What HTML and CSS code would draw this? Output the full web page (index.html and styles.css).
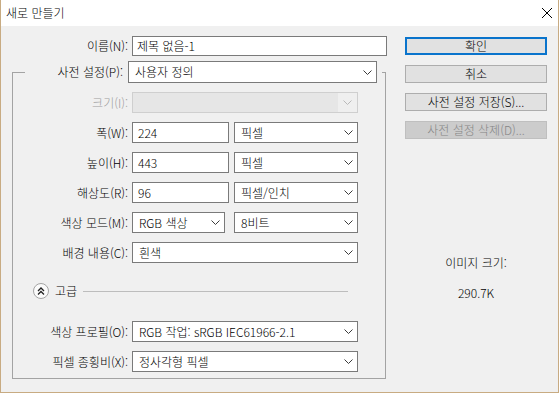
FILE: index.html
```html
<!DOCTYPE html>
<html lang="ko">
<head>
  <meta charset="UTF-8" />
  <title>새로 만들기</title>
  <link rel="stylesheet" href="styles.css">
</head>
<body>
  <div class="window">
    <div class="titlebar">
      <span class="title">새로 만들기</span>
      <svg class="close" viewBox="0 0 10 10"><path d="M0 0L10 10M10 0L0 10" stroke="#000" stroke-width="1" fill="none"/></svg>
    </div>

    <div class="content">
      <div class="main">
        <div class="row name-row">
          <span class="lbl">이름(N):</span>
          <div class="input w-name">제목 없음-1</div>
        </div>

        <fieldset class="group">
          <legend class="preset">
            <div class="preset-inner">
              <span class="lbl">사전 설정(P):</span>
              <div class="select w-preset"><span>사용자 정의</span>
                <svg class="chev" viewBox="0 0 9 5"><polyline points="0.5,0.5 4.5,4.5 8.5,0.5"/></svg>
              </div>
            </div>
          </legend>

          <div class="fields">
            <div class="row off">
              <span class="lbl">크기(I):</span>
              <div class="select w-full"><span></span>
                <span class="chev-box"><svg class="chev" viewBox="0 0 9 5"><polyline points="0.5,0.5 4.5,4.5 8.5,0.5"/></svg></span>
              </div>
            </div>
            <div class="row">
              <span class="lbl">폭(W):</span>
              <div class="pair">
                <div class="input w-num">224</div>
                <div class="select w-unit"><span>픽셀</span>
                  <svg class="chev" viewBox="0 0 9 5"><polyline points="0.5,0.5 4.5,4.5 8.5,0.5"/></svg>
                </div>
              </div>
            </div>
            <div class="row">
              <span class="lbl">높이(H):</span>
              <div class="pair">
                <div class="input w-num">443</div>
                <div class="select w-unit"><span>픽셀</span>
                  <svg class="chev" viewBox="0 0 9 5"><polyline points="0.5,0.5 4.5,4.5 8.5,0.5"/></svg>
                </div>
              </div>
            </div>
            <div class="row">
              <span class="lbl">해상도(R):</span>
              <div class="pair">
                <div class="input w-num">96</div>
                <div class="select w-unit"><span>픽셀/인치</span>
                  <svg class="chev" viewBox="0 0 9 5"><polyline points="0.5,0.5 4.5,4.5 8.5,0.5"/></svg>
                </div>
              </div>
            </div>
            <div class="row">
              <span class="lbl">색상 모드(M):</span>
              <div class="pair wide-gap">
                <div class="select w-mode"><span>RGB 색상</span>
                  <svg class="chev" viewBox="0 0 9 5"><polyline points="0.5,0.5 4.5,4.5 8.5,0.5"/></svg>
                </div>
                <div class="select w-unit"><span>8비트</span>
                  <svg class="chev" viewBox="0 0 9 5"><polyline points="0.5,0.5 4.5,4.5 8.5,0.5"/></svg>
                </div>
              </div>
            </div>
            <div class="row">
              <span class="lbl">배경 내용(C):</span>
              <div class="select w-full"><span>흰색</span>
                <svg class="chev" viewBox="0 0 9 5"><polyline points="0.5,0.5 4.5,4.5 8.5,0.5"/></svg>
              </div>
            </div>
          </div>

          <div class="advanced">
            <svg class="toggle" viewBox="0 0 16 16">
              <circle cx="8" cy="8" r="7.5" fill="#fbfbfb" stroke="#a4a4a4"/>
              <polyline points="5,8 8,5 11,8" fill="none" stroke="#222" stroke-width="1.3"/>
              <polyline points="5,11.5 8,8.5 11,11.5" fill="none" stroke="#222" stroke-width="1.3"/>
            </svg>
            <span class="adv-text">고급</span>
            <span class="adv-line"></span>
          </div>

          <div class="fields adv-fields">
            <div class="row">
              <span class="lbl">색상 프로필(O):</span>
              <div class="select w-full"><span>RGB 작업: sRGB IEC61966-2.1</span>
                <svg class="chev" viewBox="0 0 9 5"><polyline points="0.5,0.5 4.5,4.5 8.5,0.5"/></svg>
              </div>
            </div>
            <div class="row">
              <span class="lbl">픽셀 종횡비(X):</span>
              <div class="select w-full"><span>정사각형 픽셀</span>
                <svg class="chev" viewBox="0 0 9 5"><polyline points="0.5,0.5 4.5,4.5 8.5,0.5"/></svg>
              </div>
            </div>
          </div>
        </fieldset>
      </div>

      <div class="side">
        <div class="buttons">
          <div class="btn default">확인</div>
          <div class="btn">취소</div>
          <div class="btn">사전 설정 저장(S)...</div>
          <div class="btn disabled">사전 설정 삭제(D)...</div>
        </div>
        <div class="info">
          <p>이미지 크기:</p>
          <p class="size">290.7K</p>
        </div>
      </div>
    </div>
  </div>
</body>
</html>
```

FILE: styles.css
```css
* { margin: 0; padding: 0; box-sizing: border-box; }
body { width: 559px; height: 393px; overflow: hidden; background: #fff; color: #000; font-family: "Noto Sans CJK KR", "Noto Sans", sans-serif; font-size: 12px; font-weight: 300; line-height: 16px; }

.window { height: 393px; display: flex; flex-direction: column; border: 1px solid #c8ab82; border-top: none; }
.titlebar { height: 26px; flex: none; background: #fff; display: flex; align-items: center; justify-content: space-between; padding: 0 6px 0 5px; }
.close { width: 10px; height: 10px; }

.content { flex: 1; background: #f0f0f0; display: flex; }
.main { width: 388px; flex: none; padding-top: 10px; }

.row { display: flex; align-items: center; height: 21px; gap: 4px; }
.lbl { text-align: right; white-space: nowrap; }
.name-row { height: 20px; }
.name-row .lbl { width: 127px; }

.input, .select { height: 100%; background: #fff; border: 1px solid #7a7a7a; display: flex; align-items: center; white-space: nowrap; }
.input { padding-left: 4px; }
.select { justify-content: space-between; padding: 0 4px 0 6px; }
.chev { width: 9px; height: 5px; fill: none; stroke: #3a3a3a; stroke-width: 1; }

.w-name { width: 255px; }
.w-preset { width: 249px; height: 22px; }
.w-full { width: 226px; }
.w-num { width: 97px; padding-left: 5px; }
.w-unit { width: 124px; }
.w-mode { width: 93px; }

.pair { display: flex; height: 100%; gap: 5px; }
.pair.wide-gap { gap: 9px; }

.group { margin: 5px 0 0 11px; width: 374px; border: 1px solid #a3a3a3; padding: 9px 0 6px 0; }
.preset { margin-left: 12px; padding: 0 5px 0 0; }
.preset-inner { display: flex; align-items: center; gap: 5px; height: 22px; }
.preset-inner .lbl { width: 98px; }

.fields { display: flex; flex-direction: column; gap: 9px; }
.group .row .lbl { width: 115px; }

.off .lbl { color: #9d9d9d; }
.off .select { background: #e6e6e6; border-color: #cfcfcf; padding-right: 0; }
.off .chev-box { height: 100%; width: 19px; background: #efefef; display: flex; align-items: center; justify-content: center; }
.off .chev { stroke: #b9b9b9; }

.advanced { display: flex; align-items: center; height: 16px; margin-top: 20px; padding-left: 20px; }
.toggle { width: 16px; height: 16px; }
.adv-text { margin-left: 6px; }
.adv-line { flex: 1; height: 1px; background: #bdbdbd; margin: 1px 37px 0 6px; }
.adv-fields { margin-top: 22px; }

.side { flex: 1; padding: 11px 0 0 16px; }
.buttons { display: flex; flex-direction: column; gap: 10px; width: 142px; }
.btn { height: 18px; background: #e1e1e1; border: 1px solid #adadad; display: flex; align-items: center; justify-content: center; }
.btn.default { border: 2px solid #0a74cc; }
.btn.disabled { background: #cccccc; border-color: #bfbfbf; color: #858585; }

.info { width: 142px; margin-top: 116px; text-align: center; }
.info .size { margin-top: 14px; }
```
